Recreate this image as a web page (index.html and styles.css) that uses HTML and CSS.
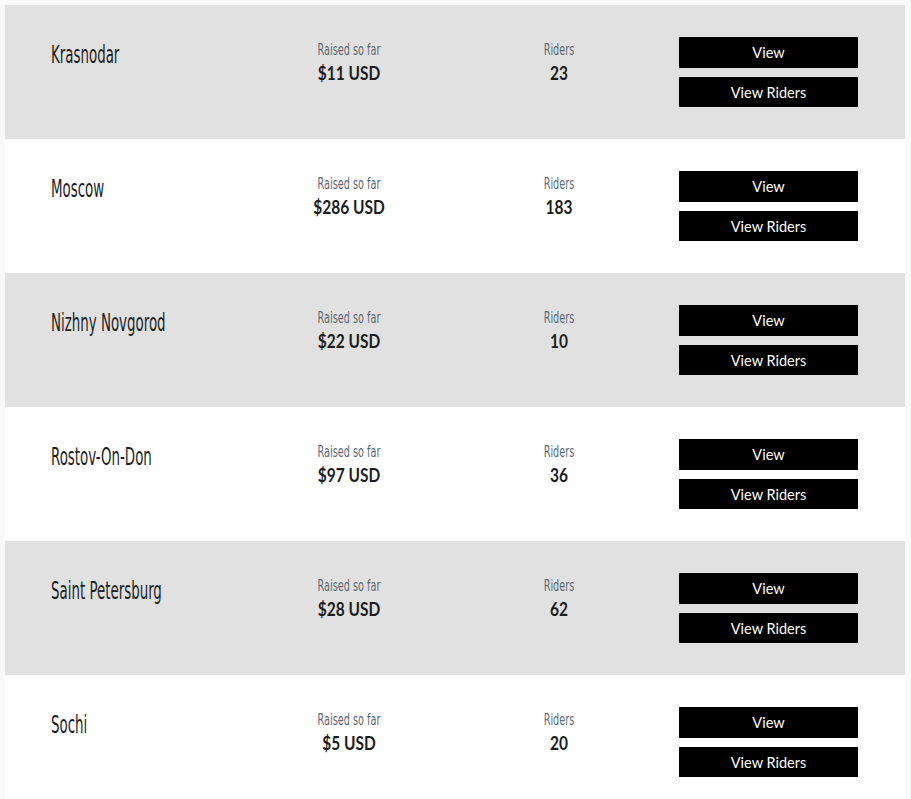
FILE: index.html
```html
<!DOCTYPE html>
<html>
<head>
<meta charset="utf-8">
<link rel="stylesheet" href="styles.css">
</head>
<body>
<div class="list">
  <div class="row gray">
    <div class="name">Krasnodar</div>
    <div class="stat"><div class="label">Raised so far</div><div class="value">$11 USD</div></div>
    <div class="stat"><div class="label">Riders</div><div class="value">23</div></div>
    <div class="actions"><a class="btn">View</a><a class="btn">View Riders</a></div>
  </div>
  <div class="row">
    <div class="name">Moscow</div>
    <div class="stat"><div class="label">Raised so far</div><div class="value">$286 USD</div></div>
    <div class="stat"><div class="label">Riders</div><div class="value">183</div></div>
    <div class="actions"><a class="btn">View</a><a class="btn">View Riders</a></div>
  </div>
  <div class="row gray">
    <div class="name">Nizhny Novgorod</div>
    <div class="stat"><div class="label">Raised so far</div><div class="value">$22 USD</div></div>
    <div class="stat"><div class="label">Riders</div><div class="value">10</div></div>
    <div class="actions"><a class="btn">View</a><a class="btn">View Riders</a></div>
  </div>
  <div class="row">
    <div class="name">Rostov-On-Don</div>
    <div class="stat"><div class="label">Raised so far</div><div class="value">$97 USD</div></div>
    <div class="stat"><div class="label">Riders</div><div class="value">36</div></div>
    <div class="actions"><a class="btn">View</a><a class="btn">View Riders</a></div>
  </div>
  <div class="row gray">
    <div class="name">Saint Petersburg</div>
    <div class="stat"><div class="label">Raised so far</div><div class="value">$28 USD</div></div>
    <div class="stat"><div class="label">Riders</div><div class="value">62</div></div>
    <div class="actions"><a class="btn">View</a><a class="btn">View Riders</a></div>
  </div>
  <div class="row">
    <div class="name">Sochi</div>
    <div class="stat"><div class="label">Raised so far</div><div class="value">$5 USD</div></div>
    <div class="stat"><div class="label">Riders</div><div class="value">20</div></div>
    <div class="actions"><a class="btn">View</a><a class="btn">View Riders</a></div>
  </div>
</div>
</body>
</html>
```
FILE: styles.css
```css
html, body {
  margin: 0;
  padding: 0;
  background: #f9f9f9;
}
body {
  padding: 5px 6px 0 5px;
  font-family: "Lato", sans-serif;
}
.list {
  display: flex;
  flex-direction: column;
}
.row {
  display: grid;
  grid-template-columns: 198px 200px 220px 1fr;
  padding: 0 47px 0 46px;
  height: 134px;
  box-sizing: border-box;
  background: #ffffff;
}
.row.gray {
  background: #e1e1e1;
}
.name {
  font-family: "DejaVu Sans Condensed", "DejaVu Sans", sans-serif;
  font-size: 24px;
  line-height: 28px;
  color: #1e1e1e;
  padding-top: 36px;
  transform: scaleX(0.62);
  transform-origin: left center;
  white-space: nowrap;
}
.stat {
  text-align: center;
  padding-top: 35px;
}
.label {
  font-family: "DejaVu Sans Condensed", "DejaVu Sans", sans-serif;
  font-weight: 300;
  font-size: 15px;
  color: #5c6a78;
  line-height: 20px;
  transform: scaleX(0.72);
}
.value {
  font-family: "Lato", sans-serif;
  font-weight: 700;
  font-size: 18px;
  color: #1c1c1c;
  line-height: 24px;
  margin-top: 1px;
  transform: scaleX(0.86);
}
.actions {
  display: flex;
  flex-direction: column;
  align-items: flex-end;
  gap: 9px;
  padding-top: 32px;
}
.btn {
  display: flex;
  align-items: center;
  justify-content: center;
  width: 179px;
  height: 31px;
  background: #000;
  color: #fff;
  font-family: "Lato", sans-serif;
  font-size: 14.5px;
}
.btn + .btn {
  height: 30px;
}
```
